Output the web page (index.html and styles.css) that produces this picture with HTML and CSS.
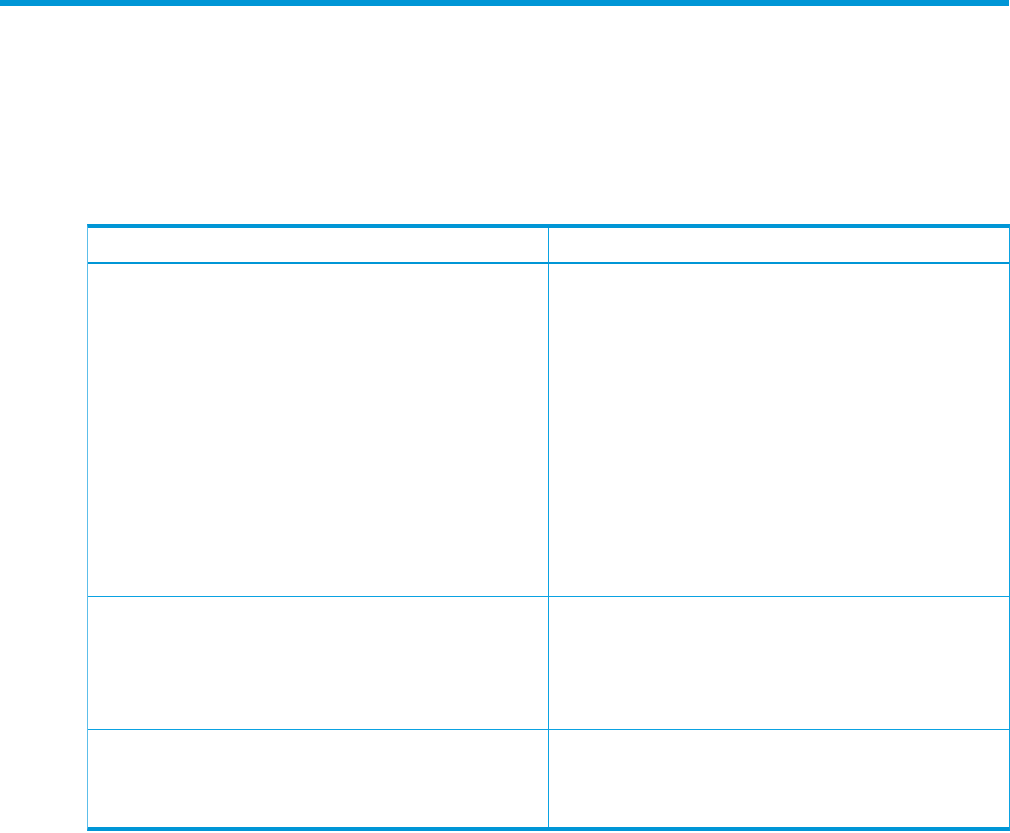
FILE: index.html
```html
<!DOCTYPE html>
<html lang="en">
<head>
    <meta charset="UTF-8">
    <meta name="viewport" content="width=device-width, initial-scale=1.0">
    <title>Document</title>
    <link rel="stylesheet" href="styles.css">
</head>
<body>
    <div class="top-bar"></div>

    <div class="page">
        <table class="doc-table">
            <thead>
                <tr class="head-row">
                    <th class="col-left"></th>
                    <th class="col-right"></th>
                </tr>
            </thead>
            <tbody>
                <tr class="row-tall">
                    <td class="col-left"></td>
                    <td class="col-right"></td>
                </tr>
                <tr class="row-mid">
                    <td class="col-left"></td>
                    <td class="col-right"></td>
                </tr>
                <tr class="row-last">
                    <td class="col-left"></td>
                    <td class="col-right"></td>
                </tr>
            </tbody>
        </table>
    </div>
</body>
</html>
```
FILE: styles.css
```css
/* General Styles */
body {
    margin: 0;
    font-family: 'Liberation Sans', Arial, sans-serif;
    background-color: #fff;
}

.top-bar {
    width: 1009px;
    height: 6px;
    background: #0096d6;
}

.page {
    padding: 218px 0 0 87px;
}

/* Table */
.doc-table {
    width: 923px;
    border-spacing: 0;
    border-top: 4px solid #0096d6;
    border-bottom: 4px solid #0096d6;
    border-left: 1px solid #5cbeea;
    border-right: 1px solid #0aa2e2;
}

.doc-table th,
.doc-table td {
    padding: 0;
    border-bottom: 1px solid #0aa2e2;
}

.doc-table .col-left {
    width: 460px;
    border-right: 1px solid #0aa2e2;
}

.doc-table th {
    height: 34px;
    border-bottom: 2px solid #0096d6;
}

.row-tall td {
    height: 332px;
}

.row-mid td {
    height: 132px;
}

.row-last td {
    height: 97px;
    border-bottom: none;
}
```
